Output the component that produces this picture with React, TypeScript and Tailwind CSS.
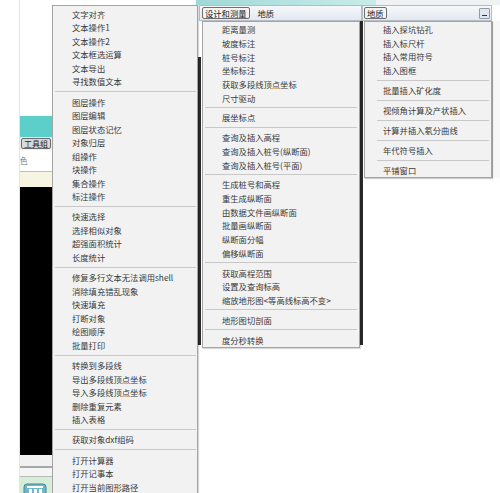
import React from 'react'

type Entry = string | null // null = separator

const leftItems: Entry[] = [
    '文字对齐', '文本操作1', '文本操作2', '文本框选运算', '文本导出', '寻找数值文本', null,
    '图层操作', '图层编辑', '图层状态记忆', '对象归层', '组操作', '块操作', '集合操作', '标注操作', null,
    '快速选择', '选择相似对象', '超强面积统计', '长度统计', null,
    '修复多行文本无法调用shell', '消除填充错乱现象', '快速填充', '打断对象', '绘图顺序', '批量打印', null,
    '转换到多段线', '导出多段线顶点坐标', '导入多段线顶点坐标', '删除重复元素', '插入表格', null,
    '获取对象dxf组码', null,
    '打开计算器', '打开记事本', '打开当前图形路径',
]

const midItems: Entry[] = [
    '距离量测', '坡度标注', '桩号标注', '坐标标注', '获取多段线顶点坐标', '尺寸驱动', null,
    '展坐标点', null,
    '查询及插入高程', '查询及插入桩号(纵断面)', '查询及插入桩号(平面)', null,
    '生成桩号和高程', '重生成纵断面', '由数据文件画纵断面', '批量画纵断面', '纵断面分幅', '偏移纵断面', null,
    '获取高程范围', '设置及查询标高', '缩放地形图<等高线标高不变>', null,
    '地形图切剖面', null,
    '度分秒转换',
]

const rightItems: Entry[] = [
    '插入探坑钻孔', '插入标尺杆', '插入常用符号', '插入图框', null,
    '批量插入矿化度', null,
    '视倾角计算及产状插入', null,
    '计算并插入氡分曲线', null,
    '年代符号插入', null,
    '平铺窗口',
]

function MenuList({ items, itemClass, sepClass, textClass }: { items: Entry[], itemClass: string, sepClass: string, textClass: string }) {
    return (
        <div className="flex flex-col">
            {items.map((it, i) =>
                it === null ? (
                    <div key={i} className={`flex items-center ${sepClass}`}>
                        <div className="h-px w-full bg-[#c8c8c8]" />
                    </div>
                ) : (
                    <div key={i} className={`flex items-center whitespace-nowrap text-[8.3px] leading-none text-[#3a3a3a] ${itemClass} ${textClass}`}>
                        {it}
                    </div>
                )
            )}
        </div>
    )
}

function BackgroundApp() {
    return (
        <div className="absolute left-0 top-0 flex h-full w-[60px]">
            <div className="h-full w-[19px] bg-white" />
            <div className="flex h-full flex-1 flex-col border-l border-[#e4e4e4]">
                <div className="h-[116px] bg-white" />
                <div className="h-[21px] bg-[#5dcfcb]" />
                <div className="flex h-[13px] items-center bg-[#ececec] pl-[1px]">
                    <div className="rounded-[2px] border border-[#6a6a6a] bg-[#d9d9d9] px-[2px] text-[8px] leading-[9px] text-[#222]">工具组</div>
                </div>
                <div className="flex h-[21px] items-center bg-white text-[7.5px] text-[#777]">色</div>
                <div className="h-px bg-[#bdbdbd]" />
                <div className="h-[15px] bg-[#f8f4e2]" />
                <div className="h-[268px] bg-black" />
                <div className="h-[11px] bg-[#f1f1f1]" />
                <div className="h-[2px] bg-[#a8a8a8]" />
                <div className="h-[8px] bg-[#f5f5f5]" />
                <div className="h-px bg-[#b9b9b9]" />
                <div className="flex flex-1 items-end bg-[#d6eed6] pl-[3px]">
                    <svg width="24" height="10" viewBox="0 0 24 10">
                        <rect x="1" y="1" width="22" height="12" rx="3" fill="#6fb7c9" stroke="#3f8aa0" />
                        <rect x="4" y="3" width="16" height="2" fill="#ffffff" />
                        <rect x="6" y="6" width="3" height="4" fill="#ffffff" />
                        <rect x="11" y="6" width="3" height="4" fill="#ffffff" />
                        <rect x="16" y="6" width="3" height="4" fill="#ffffff" />
                    </svg>
                </div>
            </div>
        </div>
    )
}

export default function App() {
    return (
        <div className="relative h-[493px] w-[500px] overflow-hidden bg-white font-['Noto_Sans_CJK_SC',sans-serif]">
            <BackgroundApp />

            {/* teal title strip behind the menu bars */}
            <div className="absolute left-[196px] top-0 h-[5px] w-[180px] bg-gradient-to-r from-[#9fd9d6] to-[#c9ecea]" />
            <div className="absolute left-[376px] top-0 h-[5px] w-[124px] bg-[#eef2f2]" />

            {/* dark slivers of the drawing area between menus */}
            <div className="absolute left-[198px] top-[57px] h-[288px] w-[3px] bg-[#2a2a2a]" />
            <div className="absolute left-[360px] top-[21px] h-[324px] w-[3px] bg-[#2a2a2a]" />
            <div className="absolute left-[492px] top-[21px] h-[157px] w-[8px] border-l border-[#c4c4c4] bg-[#f7f7f7]" />

            {/* left context menu */}
            <div className="absolute left-[52px] top-[5px] w-[146px] border border-[#a4a4a4] bg-[#f2f2f2] pt-[1.25px] shadow-[1px_1px_1px_rgba(0,0,0,0.15)]">
                <MenuList items={leftItems} itemClass="h-[13.5px]" sepClass="h-[6.8px] pl-[2px] pr-[1px]" textClass="pl-[19px]" />
            </div>

            {/* middle menu bar */}
            <div className="absolute left-[199px] top-[5px] flex h-[16px] w-[163px] items-center gap-[8px] border border-[#b4bcc6] bg-gradient-to-b from-[#f6f8fb] to-[#e3e9f0] pl-[2px]">
                <div className="rounded-[2px] border border-[#6e6e6e] bg-[#f3f3f3] px-[2px] text-[8.3px] leading-[10px] text-[#222]">设计和测量</div>
                <div className="text-[8.3px] leading-[10px] text-[#222]">地质</div>
            </div>
            <div className="absolute left-[202px] top-[21px] w-[158px] border border-[#a4a4a4] bg-[#f2f2f2] pt-[0.5px] shadow-[1px_1px_1px_rgba(0,0,0,0.15)]">
                <MenuList items={midItems} itemClass="h-[13.7px]" sepClass="h-[6.1px] pl-[2px] pr-[2px]" textClass="pl-[19px]" />
            </div>

            {/* right menu bar */}
            <div className="absolute left-[362px] top-[5px] flex h-[16px] w-[130px] items-center justify-between border border-[#b4bcc6] bg-gradient-to-b from-[#f6f8fb] to-[#e3e9f0] pl-[1px] pr-[1px]">
                <div className="rounded-[2px] border border-[#6e6e6e] bg-[#f3f3f3] px-[2px] text-[8.3px] leading-[10px] text-[#222]">地质</div>
                <div className="flex h-[11px] w-[11px] items-end justify-center rounded-[1px] border border-[#8e9aa6] bg-[#dfe6ee] pb-[2px]">
                    <div className="h-px w-[5px] bg-[#333]" />
                </div>
            </div>
            <div className="absolute left-[364px] top-[21px] w-[128px] border border-[#a4a4a4] bg-[#f2f2f2] pt-[0.5px] shadow-[1px_1px_1px_rgba(0,0,0,0.2)]">
                <MenuList items={rightItems} itemClass="h-[13.6px]" sepClass="h-[6.4px] pl-[12px] pr-[2px]" textClass="pl-[18px]" />
            </div>
        </div>
    )
}
